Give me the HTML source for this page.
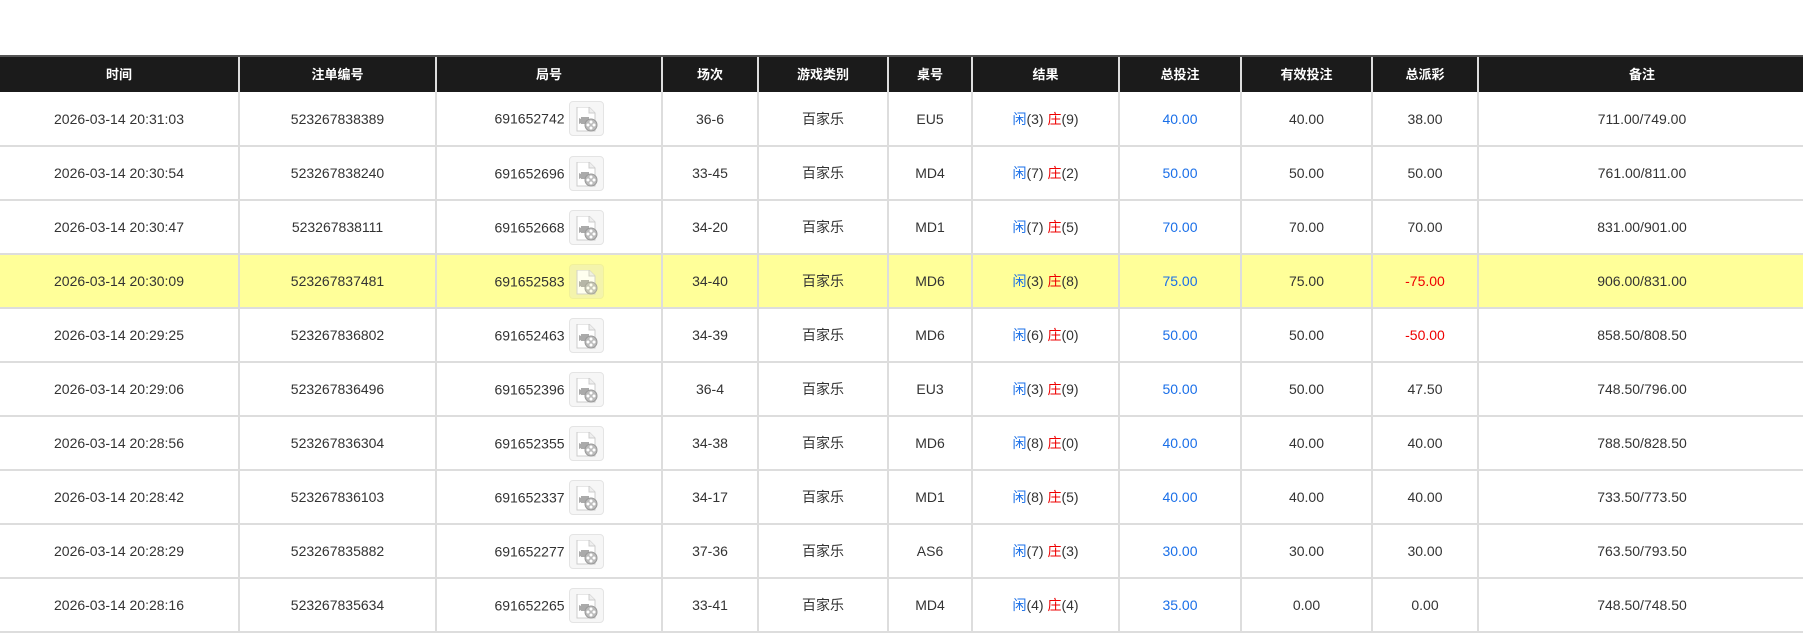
<!DOCTYPE html>
<html><head><meta charset="utf-8"><style>
body{margin:0;background:#fff;width:1803px;height:629px;overflow:hidden;font-family:"Liberation Sans","Noto Sans CJK SC",sans-serif;}
table{position:absolute;top:55px;left:0;border-collapse:collapse;table-layout:fixed;width:1805px;}
th{background:#1b1b1b;color:#fff;font-size:13px;font-weight:bold;height:36px;line-height:34px;padding:0;border-left:2px solid #ddd;border-top:2px solid #555;box-sizing:border-box}
th:first-child,td:first-child{border-left:none}
td{height:54px;line-height:20px;padding:0;text-align:center;font-size:14px;color:#333;border-left:2px solid #ddd;border-bottom:2px solid #ddd;box-sizing:border-box;vertical-align:middle}
tr.h td{background:#ffff99}
.b{color:#1a6fe8}.r{color:#e00}
.n{vertical-align:middle}
.ic{display:inline-block;width:33px;height:33px;border:1px solid #e4e4e4;border-radius:4px;background:#f6f6f6;vertical-align:middle;margin-left:4px;position:relative}
.ic svg{position:absolute;left:6px;top:5px}
tr.h .ic{background:#f3f3b0;border-color:#efef9a;opacity:.85}
</style></head><body>
<svg width="0" height="0" style="position:absolute"><defs><g id="f"><path d="M1 0h12l6 6v18H1z" fill="#fff" stroke="#ccc"/><path d="M13 0v6h6" fill="#eee" stroke="#ccc"/><rect x="5" y="10" width="8" height="7" fill="#aaa"/><path d="M3 11l2 1v4l-2 1z" fill="#aaa"/><circle cx="15" cy="18" r="6" fill="#bbb" stroke="#999"/><circle cx="15" cy="15" r="1.5" fill="#fff"/><circle cx="15" cy="21" r="1.5" fill="#fff"/><circle cx="12" cy="18" r="1.5" fill="#fff"/><circle cx="18" cy="18" r="1.5" fill="#fff"/></g></defs></svg>
<table>
<colgroup><col style="width:239px"><col style="width:197px"><col style="width:226px"><col style="width:96px"><col style="width:130px"><col style="width:84px"><col style="width:147px"><col style="width:122px"><col style="width:131px"><col style="width:106px"><col style="width:327px"></colgroup>
<tr><th>时间</th><th>注单编号</th><th>局号</th><th>场次</th><th>游戏类别</th><th>桌号</th><th>结果</th><th>总投注</th><th>有效投注</th><th>总派彩</th><th>备注</th></tr>
<tr><td>2026-03-14 20:31:03</td><td>523267838389</td><td><span class="n">691652742</span><span class="ic"><svg width="22" height="25"><use href="#f"/></svg></span></td><td>36-6</td><td>百家乐</td><td>EU5</td><td><span class="b">闲</span>(3) <span class="r">庄</span>(9)</td><td class="b">40.00</td><td>40.00</td><td>38.00</td><td>711.00/749.00</td></tr>
<tr><td>2026-03-14 20:30:54</td><td>523267838240</td><td><span class="n">691652696</span><span class="ic"><svg width="22" height="25"><use href="#f"/></svg></span></td><td>33-45</td><td>百家乐</td><td>MD4</td><td><span class="b">闲</span>(7) <span class="r">庄</span>(2)</td><td class="b">50.00</td><td>50.00</td><td>50.00</td><td>761.00/811.00</td></tr>
<tr><td>2026-03-14 20:30:47</td><td>523267838111</td><td><span class="n">691652668</span><span class="ic"><svg width="22" height="25"><use href="#f"/></svg></span></td><td>34-20</td><td>百家乐</td><td>MD1</td><td><span class="b">闲</span>(7) <span class="r">庄</span>(5)</td><td class="b">70.00</td><td>70.00</td><td>70.00</td><td>831.00/901.00</td></tr>
<tr class="h"><td>2026-03-14 20:30:09</td><td>523267837481</td><td><span class="n">691652583</span><span class="ic"><svg width="22" height="25"><use href="#f"/></svg></span></td><td>34-40</td><td>百家乐</td><td>MD6</td><td><span class="b">闲</span>(3) <span class="r">庄</span>(8)</td><td class="b">75.00</td><td>75.00</td><td class="r">-75.00</td><td>906.00/831.00</td></tr>
<tr><td>2026-03-14 20:29:25</td><td>523267836802</td><td><span class="n">691652463</span><span class="ic"><svg width="22" height="25"><use href="#f"/></svg></span></td><td>34-39</td><td>百家乐</td><td>MD6</td><td><span class="b">闲</span>(6) <span class="r">庄</span>(0)</td><td class="b">50.00</td><td>50.00</td><td class="r">-50.00</td><td>858.50/808.50</td></tr>
<tr><td>2026-03-14 20:29:06</td><td>523267836496</td><td><span class="n">691652396</span><span class="ic"><svg width="22" height="25"><use href="#f"/></svg></span></td><td>36-4</td><td>百家乐</td><td>EU3</td><td><span class="b">闲</span>(3) <span class="r">庄</span>(9)</td><td class="b">50.00</td><td>50.00</td><td>47.50</td><td>748.50/796.00</td></tr>
<tr><td>2026-03-14 20:28:56</td><td>523267836304</td><td><span class="n">691652355</span><span class="ic"><svg width="22" height="25"><use href="#f"/></svg></span></td><td>34-38</td><td>百家乐</td><td>MD6</td><td><span class="b">闲</span>(8) <span class="r">庄</span>(0)</td><td class="b">40.00</td><td>40.00</td><td>40.00</td><td>788.50/828.50</td></tr>
<tr><td>2026-03-14 20:28:42</td><td>523267836103</td><td><span class="n">691652337</span><span class="ic"><svg width="22" height="25"><use href="#f"/></svg></span></td><td>34-17</td><td>百家乐</td><td>MD1</td><td><span class="b">闲</span>(8) <span class="r">庄</span>(5)</td><td class="b">40.00</td><td>40.00</td><td>40.00</td><td>733.50/773.50</td></tr>
<tr><td>2026-03-14 20:28:29</td><td>523267835882</td><td><span class="n">691652277</span><span class="ic"><svg width="22" height="25"><use href="#f"/></svg></span></td><td>37-36</td><td>百家乐</td><td>AS6</td><td><span class="b">闲</span>(7) <span class="r">庄</span>(3)</td><td class="b">30.00</td><td>30.00</td><td>30.00</td><td>763.50/793.50</td></tr>
<tr><td>2026-03-14 20:28:16</td><td>523267835634</td><td><span class="n">691652265</span><span class="ic"><svg width="22" height="25"><use href="#f"/></svg></span></td><td>33-41</td><td>百家乐</td><td>MD4</td><td><span class="b">闲</span>(4) <span class="r">庄</span>(4)</td><td class="b">35.00</td><td>0.00</td><td>0.00</td><td>748.50/748.50</td></tr>
</table>
</body></html>
